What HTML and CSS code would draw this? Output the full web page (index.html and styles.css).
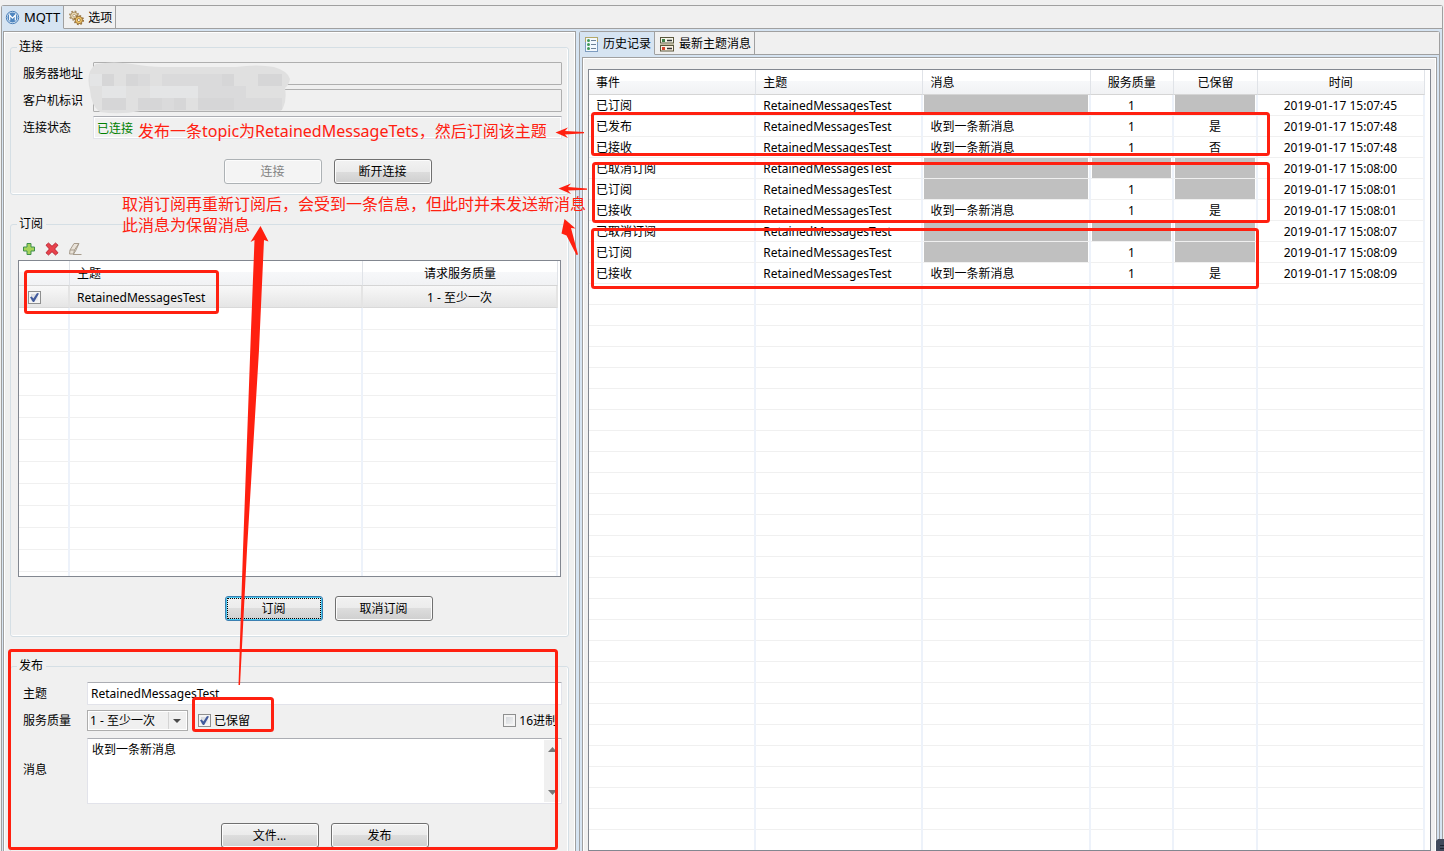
FILE: index.html
```html
<!DOCTYPE html>
<html lang="zh-CN">
<head>
<meta charset="utf-8">
<title>MQTT</title>
<link rel="stylesheet" href="styles.css">
</head>
<body>
<div class="app">
  <main class="folder">
    <nav class="tabs">
      <button class="tab tab-active tab-main" type="button">
        <svg width="15" height="15" viewBox="0 0 15 15"><circle cx="7.500" cy="7.500" r="6.200" fill="#dbe9f6" stroke="#4a7fb8"/><circle cx="7.500" cy="7.500" r="5" fill="#4f86c0"/><path d="M4.700 10.500V5l2.800 3.200L10.300 5v5.500" fill="none" stroke="#fff" stroke-width="1.200"/></svg>
        <span>MQTT</span>
      </button>
      <button class="tab" type="button">
        <svg width="15" height="16" viewBox="0 0 16 16"><circle cx="5.500" cy="5.500" r="3.800" fill="#e9d9b4" stroke="#a58a5e"/><circle cx="5.500" cy="5.500" r="4.700" fill="none" stroke="#a58a5e" stroke-width="1.600" stroke-dasharray="1.800 1.900"/><circle cx="5.500" cy="5.500" r="1.400" fill="#fff" stroke="#a58a5e" stroke-width=".8"/><circle cx="10.500" cy="10.200" r="3.900" fill="#f3c866" stroke="#98713a"/><circle cx="10.500" cy="10.200" r="4.700" fill="none" stroke="#98713a" stroke-width="1.600" stroke-dasharray="1.800 1.900"/><circle cx="10.500" cy="10.200" r="1.600" fill="#fff" stroke="#98713a" stroke-width=".9"/></svg>
        <span>选项</span>
      </button>
      <div class="tabs-rest"></div>
    </nav>
    <div class="split">
      <section class="pane left-pane">
        <fieldset class="group">
          <legend>连接</legend>
          <div class="form form-connect">
            <label for="server">服务器地址</label>
            <input class="field field-locked" id="server" type="text" readonly>
            <label for="client">客户机标识</label>
            <input class="field field-locked" id="client" type="text" readonly>
            <label for="state">连接状态</label>
            <input class="field field-state" id="state" type="text" value="已连接" readonly>
            <div class="actions actions-connect">
              <button class="btn" type="button" disabled>连接</button>
              <button class="btn" type="button">断开连接</button>
            </div>
          </div>
        </fieldset>

        <fieldset class="group">
          <legend>订阅</legend>
          <div class="subscribe">
            <div class="toolbar">
              <button class="tool" type="button" aria-label="添加"><svg width="14" height="14" viewBox="0 0 14 14"><path d="M5 1.500h4V5h3.500v4H9v3.500H5V9H1.500V5H5z" fill="#a5d35a" stroke="#3f8f4c"/></svg></button>
              <button class="tool" type="button" aria-label="删除"><svg width="14" height="14" viewBox="0 0 14 14"><path d="M3.500 1 7 4.300 10.500 1 13 3.200 9.600 7 13 10.800 10.500 13 7 9.700 3.500 13 1 10.800 4.400 7 1 3.200z" fill="#e8424c" stroke="#b51f2c" stroke-width=".9"/></svg></button>
              <button class="tool" type="button" aria-label="清除"><svg width="14" height="14" viewBox="0 0 14 14"><path d="M6 1.500h5L7.500 9 5.500 12h-4l.5-4z" fill="#e9e2d8" stroke="#a79c8d"/><path d="M2 8h4.500l4-6M6.500 8l-1 4" fill="none" stroke="#a79c8d"/><path d="M5 12.500h8.500" stroke="#a79c8d"/></svg></button>
            </div>
            <div class="table-box sub-box">
              <table class="grid sub-grid">
                <colgroup><col class="c-check"><col class="c-sub-topic"><col></colgroup>
                <thead><tr><th></th><th>主题</th><th class="mid">请求服务质量</th></tr></thead>
                <tbody>
                  <tr class="picked"><td><input class="check" type="checkbox" aria-label="RetainedMessagesTest" checked></td><td>RetainedMessagesTest</td><td class="mid">1 - 至少一次</td></tr>
                  <tr class="filler"><td></td><td></td><td></td></tr>
                </tbody>
              </table>
            </div>
            <div class="actions actions-subscribe">
              <button class="btn btn-focus" type="button">订阅</button>
              <button class="btn" type="button">取消订阅</button>
            </div>
          </div>
        </fieldset>

        <fieldset class="group">
          <legend>发布</legend>
          <div class="form form-publish">
            <label for="topic">主题</label>
            <input class="field" id="topic" type="text" value="RetainedMessagesTest">
            <label for="qos">服务质量</label>
            <div class="options">
              <div class="select-box">
                <select id="qos"><option>1 - 至少一次</option></select>
                <svg class="caret" width="18" height="17" viewBox="0 0 18 17"><path d="M.5 0v17" stroke="#d4d4d4"/><path d="M5 7h8l-4 4z" fill="#4a4a4a"/></svg>
              </div>
              <label class="opt"><input class="check" type="checkbox" checked>已保留</label>
              <label class="opt opt-hex"><input class="check" type="checkbox">16进制</label>
            </div>
            <label for="message">消息</label>
            <div class="memo">
              <textarea id="message">收到一条新消息</textarea>
              <div class="scroll">
                <svg width="9" height="5" viewBox="0 0 9 5"><path d="M0 5h9L4.500 0z" fill="#777"/></svg>
                <svg width="9" height="5" viewBox="0 0 9 5"><path d="M0 0h9L4.500 5z" fill="#777"/></svg>
              </div>
            </div>
            <div class="actions actions-publish">
              <button class="btn" type="button">文件...</button>
              <button class="btn" type="button">发布</button>
            </div>
          </div>
        </fieldset>
      </section>

      <section class="folder folder-inner">
        <nav class="tabs">
          <button class="tab tab-active" type="button">
            <svg width="14" height="15" viewBox="0 0 14 15"><rect x=".5" y=".5" width="12" height="14" fill="#f2f8fd" stroke="#7d9cc0"/><path d="M.5 5V.5h12V5" fill="none" stroke="#b5a867"/><circle cx="3.500" cy="3.500" r="1.500" fill="#3f9a58"/><circle cx="3.500" cy="7.500" r="1.500" fill="#3f9a58"/><circle cx="3.500" cy="11.500" r="1.500" fill="#3f9a58"/><path d="M6 3.500h5M6 7.500h5M6 11.500h5" stroke="#6c8197"/></svg>
            <span>历史记录</span>
          </button>
          <button class="tab" type="button">
            <svg width="15" height="15" viewBox="0 0 15 15"><rect x=".5" y=".5" width="13" height="5.500" fill="#f5f6ea" stroke="#5a563c"/><rect x=".5" y="8.500" width="13" height="5.500" fill="#fbf1e4" stroke="#5a563c"/><path d="M0 7.200h14" stroke="#aaa47c"/><rect x="2" y="2" width="3" height="3" fill="#3d8047"/><rect x="2" y="10" width="3" height="3" fill="#d6452f"/><path d="M7 3.500h5M7 11.500h5" stroke="#333" stroke-width="1.400"/></svg>
            <span>最新主题消息</span>
          </button>
          <div class="tabs-rest"></div>
        </nav>
        <div class="history-wrap">
          <div class="pane history">
            <div class="table-box history-box">
              <table class="grid">
                <colgroup><col class="c-wide"><col class="c-wide"><col class="c-wide"><col class="c-thin"><col class="c-thin"><col class="c-wide"></colgroup>
                <thead><tr><th>事件</th><th>主题</th><th>消息</th><th class="mid">服务质量</th><th class="mid">已保留</th><th class="mid">时间</th></tr></thead>
                <tbody>
                  <tr><td>已订阅</td><td>RetainedMessagesTest</td><td class="na"></td><td class="mid">1</td><td class="na"></td><td class="mid">2019-01-17 15:07:45</td></tr>
                  <tr><td>已发布</td><td>RetainedMessagesTest</td><td>收到一条新消息</td><td class="mid">1</td><td class="mid">是</td><td class="mid">2019-01-17 15:07:48</td></tr>
                  <tr><td>已接收</td><td>RetainedMessagesTest</td><td>收到一条新消息</td><td class="mid">1</td><td class="mid">否</td><td class="mid">2019-01-17 15:07:48</td></tr>
                  <tr><td>已取消订阅</td><td>RetainedMessagesTest</td><td class="na"></td><td class="na"></td><td class="na"></td><td class="mid">2019-01-17 15:08:00</td></tr>
                  <tr><td>已订阅</td><td>RetainedMessagesTest</td><td class="na"></td><td class="mid">1</td><td class="na"></td><td class="mid">2019-01-17 15:08:01</td></tr>
                  <tr><td>已接收</td><td>RetainedMessagesTest</td><td>收到一条新消息</td><td class="mid">1</td><td class="mid">是</td><td class="mid">2019-01-17 15:08:01</td></tr>
                  <tr><td>已取消订阅</td><td>RetainedMessagesTest</td><td class="na"></td><td class="na"></td><td class="na"></td><td class="mid">2019-01-17 15:08:07</td></tr>
                  <tr><td>已订阅</td><td>RetainedMessagesTest</td><td class="na"></td><td class="mid">1</td><td class="na"></td><td class="mid">2019-01-17 15:08:09</td></tr>
                  <tr><td>已接收</td><td>RetainedMessagesTest</td><td>收到一条新消息</td><td class="mid">1</td><td class="mid">是</td><td class="mid">2019-01-17 15:08:09</td></tr>
                  <tr class="filler"><td></td><td></td><td></td><td></td><td></td><td></td></tr>
                </tbody>
              </table>
            </div>
          </div>
        </div>
      </section>
    </div>
  </main>

  <!-- Markup layer: masked address, highlight frames and arrows -->
  <svg class="marks" width="1444" height="851" viewBox="0 0 1444 851">
    <path d="M96 64q18-3 36 0t30 3h74q22-3 38 0 14 4 16 12-1 6-5 9 2 12-2 20-1 3-3 3H140q-20 4-40 1-9-6-10-22-5-18 6-26z" fill="#e0e0e0"/>
    <path d="M102 74h12v12h-12zM126 74h12v12h-12zM222 74h12v12h-12zM258 74h24v12h-24zM102 98h24v12h-24zM138 98h24v12h-24zM174 98h12v12h-12zM198 98h36v12h-36z" fill="#d6d6d7"/>
    <path d="M138 74h12v12h-12zM162 74h60v12h-60zM234 86h12v12h-12zM198 86h36v12h-36zM234 98h48v12h-48zM162 98h12v12h-12z" fill="#dadadb"/>
    <path d="M102 86h24v12h-24zM150 86h48v12h-48zM90 74h12v12H90z" fill="#e4e5e6"/>
    <g fill="none" stroke="#ff2010" stroke-width="3">
      <rect x="592.500" y="113.500" width="676" height="41" rx="2"/>
      <rect x="593.500" y="163.500" width="675" height="58" rx="2"/>
      <rect x="592.500" y="229.500" width="665" height="58" rx="2"/>
      <rect x="25.500" y="271.500" width="192" height="41" rx="2"/>
      <rect x="193.500" y="698.500" width="79" height="32" rx="2"/>
      <rect x="9.500" y="650.500" width="547" height="198" rx="2"/>
    </g>
    <g fill="#ff2010">
      <path d="M555.500 132.500 568 127.500 565 131l19 1v1.200l-19 1.300 3 3.500z"/>
      <path d="M558.500 188.500 571 183.500 568 187l19 1.500v1.200L568 190.500l3 3.500z"/>
      <path d="M564.500 219 575.500 228.500 571 228l7 26.500-1.500.5-10-19.500-5-2z"/>
      <path d="M260.500 226 268.500 241.500 264 240 259 350 247 550 240 685h-1.500L243 550l8-220 3.500-90-4 2z"/>
    </g>
    <path d="M1438 839h6v12h-8v-10z" fill="#414a5c"/>
    <path d="M1440 845.500h4M1440 848.500h4" stroke="#1d2330"/>
  </svg>
  <p class="note note-publish">发布一条topic为RetainedMessageTets，然后订阅该主题</p>
  <p class="note note-retained">取消订阅再重新订阅后，会受到一条信息，但此时并未发送新消息<br>此消息为保留消息</p>
</div>
</body>
</html>
```
FILE: styles.css
```css
* { box-sizing: border-box; }

body {
  margin: 0;
  overflow: hidden;
  background: #f0f0f0;
  color: #000;
  font: 12px/16px "Noto Sans", "Noto Sans CJK SC", sans-serif;
}

button, input, select, textarea {
  margin: 0;
  font: inherit;
  color: inherit;
}

.app {
  position: relative;
  display: flex;
  height: 100vh;
  padding: 5px 1px 0;
}

.folder {
  flex: 1;
  min-width: 0;
  display: flex;
  flex-direction: column;
  border: 1px solid #a0a0a0;
  border-bottom: 0;
  border-radius: 3px 3px 0 0;
  background: #d6e4f2;
}

/* Tabs */
.tabs { display: flex; flex: none; height: 23px; }

.tab {
  display: flex;
  align-items: center;
  gap: 4px;
  padding: 2px 3px 0 5px;
  border: 0;
  border-right: 1px solid #a0a0a0;
  border-bottom: 1px solid #a0a0a0;
  background: #f0f0f0;
  white-space: nowrap;
}

.tab-active { border-bottom-color: transparent; background: #d6e4f2; }
.tab-main { padding: 0 3px; font-size: 13px; }
.tabs-rest { flex: 1; border-bottom: 1px solid #a0a0a0; background: #f0f0f0; }

/* Panes */
.split {
  flex: 1;
  min-height: 0;
  display: grid;
  grid-template-columns: minmax(0, 573fr) minmax(0, 861fr);
  gap: 3px;
  padding: 2px 2px 0 1px;
}

.pane {
  border: 1px solid #a0a0a0;
  border-bottom: 0;
  background: #f0f0f0;
  box-shadow: inset 1px 1px #fff, inset -1px 0 #fff;
}

.left-pane {
  display: flex;
  flex-direction: column;
  gap: 21px;
  min-height: 0;
  padding: 7px 6px 0;
  overflow: hidden;
}

.history-wrap { flex: 1; min-height: 0; display: flex; padding: 2px 2px 0; }
.history { flex: 1; min-width: 0; display: flex; padding: 11px 5px 0; }

/* Groups and forms */
.group {
  flex: none;
  min-width: 0;
  margin: 0;
  padding: 0 6px 9px;
  border: 1px solid #d5dfe5;
  border-radius: 3px;
  box-shadow: inset 0 -1px #fff, inset -1px 0 #fff;
}

.group legend { margin-left: 0; padding: 0 3px 0 2px; }

.form { display: grid; align-items: center; row-gap: 4px; padding-left: 6px; }
.form-connect { grid-template-columns: 70px minmax(0, 1fr); padding-top: 7px; }
.form-publish { grid-template-columns: 64px minmax(0, 1fr); padding-top: 8px; }

.field {
  width: 100%;
  height: 23px;
  padding: 0 3px;
  border: 1px solid #e2e3ea;
  border-top-color: #abadb3;
  border-radius: 1px;
  background: #fff;
}

.field-locked { border-color: #afafaf; background: #f0f0f0; }
.field-state { background: #f0f0f0; color: #008000; box-shadow: inset 0 0 0 1px #fff; }

.actions { display: flex; justify-content: center; gap: 12px; }
.actions-connect { grid-column: 2; padding: 16px 0 1px; }
.actions-publish { grid-column: 2; padding-top: 15px; }

.btn {
  width: 98px;
  height: 25px;
  padding: 0;
  border: 1px solid #707070;
  border-radius: 3px;
  background: linear-gradient(#f2f2f2, #ebebeb 50%, #dddddd 50%, #cfcfcf);
  box-shadow: inset 0 0 0 1px #fcfcfc;
}

.btn:disabled {
  border-color: #adb2b5;
  background: #f4f4f4;
  color: #838383;
}

.btn-focus {
  border-color: #3c7fb1;
  box-shadow: inset 0 0 0 1px #48c8f0;
  outline: 1px dotted #000;
  outline-offset: -3px;
}

.subscribe { display: flex; flex-direction: column; padding: 8px 1px 6px; }
.toolbar { display: flex; gap: 9px; height: 20px; padding: 2px 0 0 4px; }
.tool { display: flex; width: 14px; height: 14px; padding: 0; border: 0; background: none; }
.actions-subscribe { padding: 19px 0 0 78px; }

.options { display: flex; align-items: center; height: 23px; }
.opt { display: flex; align-items: center; gap: 3px; margin-left: 10px; }
.opt-hex { margin-left: auto; padding-right: 5px; }

.select-box { position: relative; width: 101px; height: 21px; }

.select-box select {
  width: 100%;
  height: 100%;
  padding: 0 20px 0 2px;
  border: 1px solid #adadad;
  border-radius: 0;
  background: #f0f0f0;
  box-shadow: inset 0 0 0 1px #fff;
  appearance: none;
}

.caret { position: absolute; top: 2px; right: 2px; pointer-events: none; }

.check {
  position: relative;
  flex: none;
  display: block;
  width: 13px;
  height: 13px;
  border: 1px solid #8e8f8f;
  background: linear-gradient(135deg, #cfd3d8, #f6f6f6);
  box-shadow: inset 0 0 0 2px #f4f4f4;
  appearance: none;
}

.check:checked::after {
  content: "";
  position: absolute;
  inset: 1px;
  background: #415a9c;
  clip-path: polygon(0 48%, 18% 38%, 38% 62%, 78% 0, 100% 6%, 46% 100%, 32% 100%);
}

.memo {
  display: flex;
  height: 66px;
  margin-top: 2px;
  padding: 1px;
  border: 1px solid #e2e3ea;
  border-top-color: #abadb3;
  background: #fff;
}

.memo textarea {
  flex: 1;
  min-width: 0;
  padding: 2px 3px;
  border: 0;
  background: transparent;
  resize: none;
  overflow: hidden;
}

.scroll {
  display: flex;
  flex-direction: column;
  align-items: center;
  justify-content: space-between;
  width: 16px;
  padding: 7px 0;
  background: #f0f0f0;
}

/* Tables */
.table-box {
  border: 1px solid #828790;
  background: #fff;
}

.history-box { flex: 1; min-width: 0; padding-right: 5px; }
.sub-box { height: 317px; padding-right: 2px; }

.grid {
  width: 100%;
  height: 100%;
  table-layout: fixed;
  border-spacing: 0;
}

.c-wide { width: 20%; }
.c-thin { width: 10%; }
.c-check { width: 51px; }
.c-sub-topic { width: 293px; }

.grid th {
  height: 25px;
  padding: 2px 6px 0 7px;
  border-right: 1px solid #e0e3e8;
  border-bottom: 1px solid #d5d5d5;
  background: linear-gradient(#fff 45%, #f7f8fa 45%, #f1f2f4);
  font-weight: 400;
  text-align: left;
}

.grid td {
  height: 21px;
  padding: 2px 6px 0 7px;
  border-right: 2px solid #edf2fa;
  border-bottom: 1px solid #f0f0f0;
  white-space: nowrap;
}

.sub-grid td { height: 22px; }
.sub-grid td:first-child { padding-left: 9px; }

.grid .mid { padding: 2px 0 0; text-align: center; }

.grid .na {
  background: linear-gradient(#c0c0c0, #c0c0c0) 1px 0 / calc(100% - 2px) 100% no-repeat;
}

.picked td {
  border-bottom-color: #d9d9d9;
  border-right-color: #e4e4e4;
  background: linear-gradient(#f8f8f8, #e5e5e5);
}

.grid .filler td {
  height: auto;
  border-bottom: 0;
  background: repeating-linear-gradient(#fff 0 20px, #f0f0f0 20px 21px);
}

.sub-grid .filler td {
  background: repeating-linear-gradient(#fff 0 21px, #f0f0f0 21px 22px);
}

/* Markup layer */
.marks { position: absolute; top: 0; left: 0; pointer-events: none; }

.note {
  position: absolute;
  margin: 0;
  color: #ff2010;
  font-size: 16px;
  line-height: 21px;
  white-space: nowrap;
}

.note-publish { top: 121px; left: 138px; }
.note-retained { top: 194px; left: 122px; }
```
